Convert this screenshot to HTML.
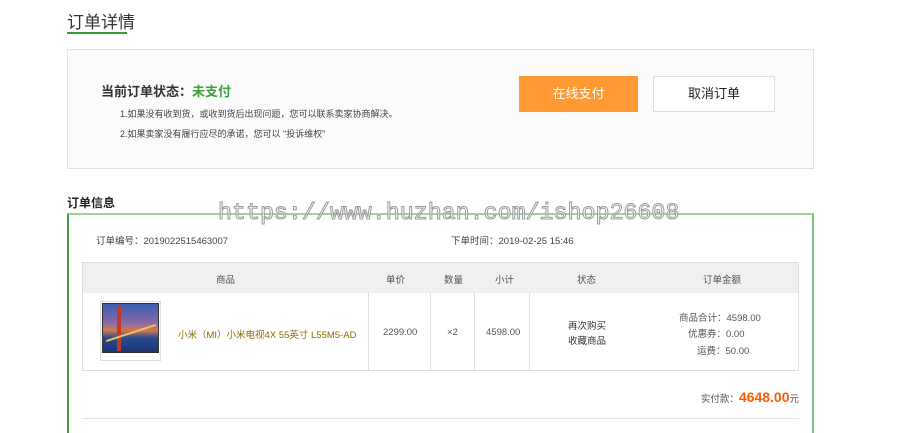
<!DOCTYPE html>
<html><head><meta charset="utf-8"><style>
*{margin:0;padding:0;box-sizing:border-box}
body{width:900px;height:425px;background:#fff;position:relative;overflow:hidden;font-family:"Liberation Sans","Noto Sans CJK SC",sans-serif;color:#333}
.a{position:absolute;white-space:nowrap}
</style></head><body>
<div class="a" style="left:67px;top:8px;font-size:17px;color:#333">订单详情</div>
<div class="a" style="left:67px;top:32px;width:60px;height:2px;background:#3c9a3c"></div>

<div class="a" style="left:67px;top:49px;width:747px;height:120px;background:#fbfbfb;border:1px solid #e2e2e2"></div>
<div class="a" style="left:101px;top:81px;font-size:13px;font-weight:bold;color:#333">当前订单状态：<span style="color:#3ca33c">未支付</span></div>
<div class="a" style="left:120px;top:107px;font-size:9px;color:#444">1.如果没有收到货，或收到货后出现问题，您可以联系卖家协商解决。</div>
<div class="a" style="left:120px;top:127px;font-size:9px;color:#444">2.如果卖家没有履行应尽的承诺，您可以 "投诉维权"</div>
<div class="a" style="left:519px;top:76px;width:119px;height:36px;background:#ff9933;color:#fff;font-size:13px;line-height:36px;text-align:center">在线支付</div>
<div class="a" style="left:653px;top:76px;width:122px;height:36px;background:#fff;border:1px solid #ddd;color:#222;font-size:13px;line-height:34px;text-align:center">取消订单</div>

<div class="a" style="left:67px;top:194px;font-size:12px;font-weight:bold;color:#222">订单信息</div>
<div class="a" style="left:67px;top:213px;width:747px;height:220px;border-top:2px solid #9fd49f;border-left:2px solid #4a9e4a;border-right:2px solid #7cc07c"></div>

<div class="a" style="left:96px;top:233px;font-size:9.5px;color:#444">订单编号：2019022515463007</div>
<div class="a" style="left:451px;top:233px;font-size:9.5px;color:#444">下单时间：2019-02-25 15:46</div>

<div class="a" style="left:82px;top:262px;width:717px;height:109px;border:1px solid #ddd"></div>
<div class="a" style="left:83px;top:263px;width:715px;height:30px;background:#f0f0f0"></div>
<div class="a" style="left:529px;top:293px;width:112px;height:1px;background:#fff"></div>
<div class="a" style="left:368px;top:293px;width:1px;height:77px;background:#ddd"></div>
<div class="a" style="left:430px;top:293px;width:1px;height:77px;background:#ddd"></div>
<div class="a" style="left:474px;top:293px;width:1px;height:77px;background:#ddd"></div>
<div class="a" style="left:529px;top:293px;width:1px;height:77px;background:#ddd"></div>
<div style="font-size:9.5px;color:#555">
<div class="a" style="left:216px;top:272px">商品</div>
<div class="a" style="left:386px;top:272px">单价</div>
<div class="a" style="left:444px;top:272px">数量</div>
<div class="a" style="left:495px;top:272px">小计</div>
<div class="a" style="left:577px;top:272px">状态</div>
<div class="a" style="left:703px;top:272px">订单金额</div>
<div class="a" style="left:178px;top:327px;color:#8a6d00">小米（MI）小米电视4X 55英寸 L55M5-AD</div>
<div class="a" style="left:383px;top:327px">2299.00</div>
<div class="a" style="left:447px;top:327px">×2</div>
<div class="a" style="left:486px;top:327px">4598.00</div>
<div class="a" style="left:568px;top:318px;color:#333">再次购买</div>
<div class="a" style="left:568px;top:333px;color:#333">收藏商品</div>
<div class="a" style="left:679px;top:310px">商品合计：4598.00</div>
<div class="a" style="left:688px;top:326px">优惠券：0.00</div>
<div class="a" style="left:697px;top:343px">运费：50.00</div>
</div>
<div class="a" style="left:100px;top:301px;width:61px;height:60px;border:1px solid #ddd;background:#fff"></div>
<div class="a" style="left:102px;top:303px;width:57px;height:50px;background:linear-gradient(180deg,#3a5fb0 0%,#8a6aa8 40%,#d07a50 55%,#2a4c90 70%,#1c3570 100%);border:1px solid #333"></div>
<div class="a" style="left:117px;top:305px;width:4px;height:46px;background:#c0392b"></div>
<div class="a" style="left:105px;top:332px;width:52px;height:2px;background:#f5c060;transform:rotate(-18deg)"></div>

<div class="a" style="right:101px;top:389px;font-size:9.5px;color:#555">实付款：<span style="font-size:14px;font-weight:bold;color:#ff5a00">4648.00</span>元</div>
<div class="a" style="left:82px;top:418px;width:717px;height:1px;background:#e2e2e2"></div>

<div class="a" style="left:218px;top:200px;font-family:'Liberation Mono',monospace;font-size:23.3px;color:rgba(255,255,255,.6);-webkit-text-stroke:1px #999">https://www.huzhan.com/ishop26608</div>
</body></html>
